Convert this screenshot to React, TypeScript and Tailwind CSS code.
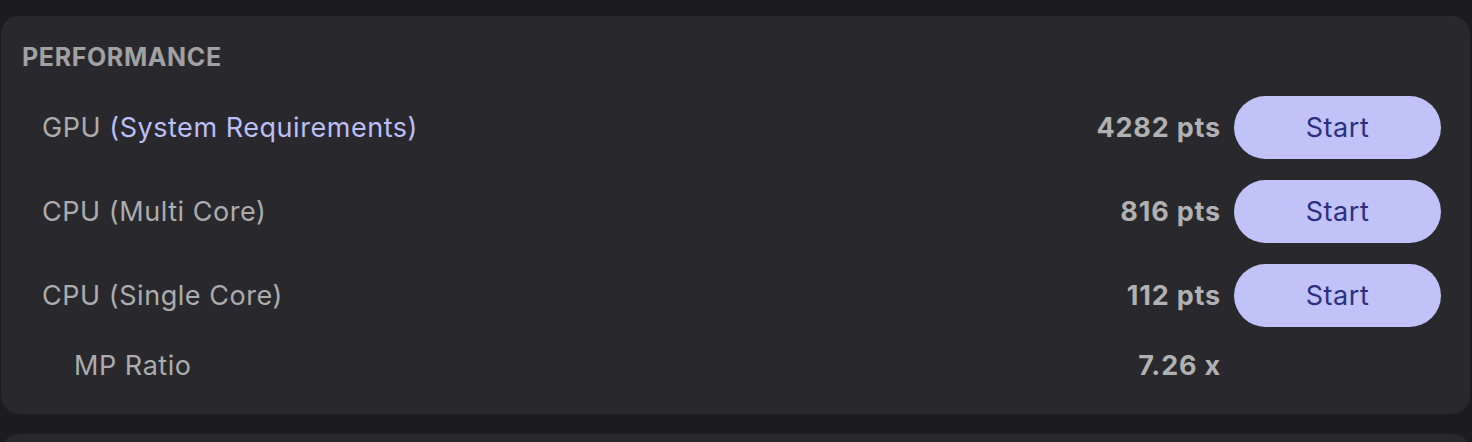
const rows = [
  { name: "GPU", detail: "(System Requirements)", link: true, score: "4282 pts" },
  { name: "CPU", detail: "(Multi Core)", link: false, score: "816 pts" },
  { name: "CPU", detail: "(Single Core)", link: false, score: "112 pts" },
];

export default function App() {
  return (
    <div className="h-[442px] w-full overflow-hidden bg-[#1c1c1e] pt-4 font-['Inter','Noto_Sans',sans-serif] antialiased">
      <section className="ml-px mr-[2px] rounded-[18px] bg-[#29292d] pb-8 pt-[26px]">
        <h2 className="pl-[21px] text-[25px] font-bold leading-[30px] tracking-[0.025em] text-[#a1a1a3]">
          PERFORMANCE
        </h2>

        <div className="mt-[24px] flex flex-col gap-[21px]">
          {rows.map((row) => (
            <div key={row.detail} className="flex h-[63px] items-center pl-[41px] pr-[29px]">
              <p className="flex-1 text-[27px] leading-none tracking-[0.02em] text-[#acacae]">
                {row.name}{" "}
                <span className={row.link ? "text-[#bcbef8]" : ""}>{row.detail}</span>
              </p>
              <span className="text-[27px] font-bold leading-none tracking-[0.03em] text-[#b1b1b3]">
                {row.score}
              </span>
              <button
                type="button"
                className="ml-[13px] h-[63px] w-[207px] rounded-full bg-[#c0c2f8] text-[27px] leading-none tracking-[0.02em] text-[#2c2f80]"
              >
                Start
              </button>
            </div>
          ))}

          <div className="flex h-[34px] items-center pl-[73px] pr-[249px]">
            <p className="flex-1 text-[27px] leading-none tracking-[0.02em] text-[#acacae]">MP Ratio</p>
            <span className="text-[27px] font-bold leading-none tracking-[0.03em] text-[#b1b1b3]">7.26 x</span>
          </div>
        </div>
      </section>
      <div className="mx-px mt-5 h-10 rounded-t-[18px] bg-[#29292d]" />
    </div>
  );
}
